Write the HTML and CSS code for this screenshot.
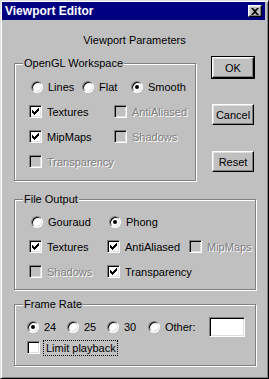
FILE: index.html
```html
<!DOCTYPE html>
<html>
<head>
	<meta charset="utf-8">
	<title>Viewport Editor</title>
	<link rel="stylesheet" href="styles.css">
</head>
<body>

<div class="window">
    <div class="titlebar">
        <span class="title">Viewport Editor</span>
        <span class="close-btn">
            <svg width="8" height="7" viewBox="0 0 8 7"><path d="M0 0h2l2 2 2-2h2l-3 3.5 3 3.5h-2l-2-2-2 2h-2l3-3.5z" fill="#000"/></svg>
        </span>
    </div>

    <div class="heading">Viewport Parameters</div>

    <div class="main">
        <div class="top-row">
            <!-- OpenGL settings -->
            <div class="group group-gl">
                <span class="legend">OpenGL Workspace</span>
                <div class="row radio-row">
                    <label class="opt w51"><span class="radio"></span>Lines</label>
                    <label class="opt w49"><span class="radio"></span>Flat</label>
                    <label class="opt"><span class="radio on"></span>Smooth</label>
                </div>
                <div class="row">
                    <label class="opt w85"><span class="check"><svg width="11" height="11"><path d="M2 4h1v1h1v1h1v-1h1v-1h1v-1h1v-1h1v3h-1v1h-1v1h-1v1h-1v1h-1v-1h-1v-1h-1z"/></svg></span>Textures</label>
                    <label class="opt dim"><span class="check off"></span>AntiAliased</label>
                </div>
                <div class="row">
                    <label class="opt w85"><span class="check"><svg width="11" height="11"><path d="M2 4h1v1h1v1h1v-1h1v-1h1v-1h1v-1h1v3h-1v1h-1v1h-1v1h-1v1h-1v-1h-1v-1h-1z"/></svg></span>MipMaps</label>
                    <label class="opt dim"><span class="check off"></span>Shadows</label>
                </div>
                <div class="row">
                    <label class="opt dim"><span class="check off"></span>Transparency</label>
                </div>
            </div>

            <div class="buttons">
                <button class="btn default">OK</button>
                <button class="btn">Cancel</button>
                <button class="btn">Reset</button>
            </div>
        </div>

        <!-- output settings -->
        <div class="group group-file">
            <span class="legend">File Output</span>
            <div class="row radio-row">
                <label class="opt w78"><span class="radio"></span>Gouraud</label>
                <label class="opt"><span class="radio on"></span>Phong</label>
            </div>
            <div class="row">
                <label class="opt w78"><span class="check"><svg width="11" height="11"><path d="M2 4h1v1h1v1h1v-1h1v-1h1v-1h1v-1h1v3h-1v1h-1v1h-1v1h-1v1h-1v-1h-1v-1h-1z"/></svg></span>Textures</label>
                <label class="opt w82"><span class="check"><svg width="11" height="11"><path d="M2 4h1v1h1v1h1v-1h1v-1h1v-1h1v-1h1v3h-1v1h-1v1h-1v1h-1v1h-1v-1h-1v-1h-1z"/></svg></span>AntiAliased</label>
                <label class="opt dim"><span class="check off"></span>MipMaps</label>
            </div>
            <div class="row">
                <label class="opt w78 dim"><span class="check off"></span>Shadows</label>
                <label class="opt"><span class="check"><svg width="11" height="11"><path d="M2 4h1v1h1v1h1v-1h1v-1h1v-1h1v-1h1v3h-1v1h-1v1h-1v1h-1v1h-1v-1h-1v-1h-1z"/></svg></span>Transparency</label>
            </div>
        </div>

        <!-- frame rate -->
        <div class="group group-rate">
            <span class="legend">Frame Rate</span>
            <div class="row short">
                <label class="opt w40"><span class="radio on"></span>24</label>
                <label class="opt w40"><span class="radio"></span>25</label>
                <label class="opt w41"><span class="radio"></span>30</label>
                <label class="opt w61"><span class="radio"></span>Other:</label>
                <input class="field" type="text">
            </div>
            <div class="row short">
                <label class="opt"><span class="check blank"></span><span class="focus">Limit playback</span></label>
            </div>
        </div>
    </div>
</div>

</body>
</html>
```

FILE: styles.css
```css
body {
    margin: 0;
    font-family: "Liberation Sans", Arial, sans-serif;
    font-size: 11px;
    background-color: #c0c0c0;
    color: #000;
}

.window {
    width: 269px;
    height: 379px;
    box-sizing: border-box;
    padding: 1px;
    background-color: #c0c0c0;
    border: 1px solid;
    border-color: #dfdfdf #000 #000 #dfdfdf;
    box-shadow: inset 1px 1px #fff, inset -1px -1px #808080;
}

.titlebar {
    height: 18px;
    margin-right: 2px;
    padding-left: 3px;
    display: flex;
    align-items: center;
    background-color: #000080;
    color: #fff;
}

.title {
    flex: 1;
    font-size: 12px;
    font-weight: bold;
}

.close-btn {
    width: 14px;
    height: 12px;
    margin-right: 3px;
    box-sizing: border-box;
    display: flex;
    align-items: center;
    justify-content: center;
    background-color: #c0c0c0;
    border: 1px solid;
    border-color: #fff #000 #000 #fff;
    box-shadow: inset -1px -1px #808080, inset 1px 1px #dfdfdf;
}

.close-btn svg {
    display: block;
}

.heading {
    margin-top: 13px;
    line-height: 14px;
    text-align: center;
}

.main {
    padding-left: 12px;
}

.top-row {
    display: flex;
    align-items: flex-start;
    margin-top: 9px;
}

/* etched group frame */
.group {
    position: relative;
    box-sizing: border-box;
    border: 1px solid #808080;
    box-shadow: inset 1px 1px #fff, 1px 1px #fff;
}

.legend {
    position: absolute;
    top: -7px;
    left: 8px;
    padding: 0 1px;
    line-height: 13px;
    background-color: #c0c0c0;
}

.group-gl {
    width: 182px;
    height: 118px;
    margin-top: 7px;
    padding: 10px 0 0 14px;
}

.group-file {
    width: 242px;
    height: 91px;
    margin-top: 18px;
    padding: 9px 0 0 14px;
}

.group-rate {
    width: 242px;
    height: 62px;
    margin-top: 14px;
    padding: 11px 0 0 12px;
}

.row {
    display: flex;
    align-items: center;
    height: 25px;
}

.row.short {
    height: 21px;
}

.radio-row {
    padding-left: 2px;
}

.opt {
    display: flex;
    align-items: center;
    white-space: nowrap;
}

.w40 { width: 40px; }
.w41 { width: 41px; }
.w49 { width: 49px; }
.w51 { width: 51px; }
.w61 { width: 61px; }
.w78 { width: 78px; }
.w82 { width: 82px; }
.w85 { width: 85px; }

.dim {
    color: #808080;
    text-shadow: 1px 1px 0 #fff;
}

.radio {
    flex: none;
    width: 12px;
    height: 12px;
    margin-right: 5px;
    box-sizing: border-box;
    display: flex;
    align-items: center;
    justify-content: center;
    border-radius: 50%;
    border: 1px solid;
    border-color: #808080 #fff #fff #808080;
    box-shadow: inset 1px 1px #000, inset -1px -1px #dfdfdf;
    background-color: #fff;
}

.radio.on::after {
    content: "";
    width: 4px;
    height: 4px;
    border-radius: 50%;
    background-color: #000;
}

.check {
    flex: none;
    width: 13px;
    height: 13px;
    margin-right: 5px;
    box-sizing: border-box;
    border: 1px solid;
    border-color: #808080 #fff #fff #808080;
    box-shadow: inset 1px 1px #000, inset -1px -1px #dfdfdf;
    background-color: #fff;
}

.check svg {
    display: block;
}

.check.off {
    background-color: #c0c0c0;
}

.check.blank {
    margin-right: 3px;
}

.focus {
    padding: 0 1px 0 2px;
    line-height: 14px;
    border: 1px dotted #000;
}

.field {
    width: 36px;
    height: 20px;
    margin: 0;
    padding: 0;
    box-sizing: border-box;
    border: 1px solid;
    border-color: #808080 #fff #fff #808080;
    box-shadow: inset 1px 1px #000, inset -1px -1px #dfdfdf;
    background-color: #fff;
    outline: none;
}

.buttons {
    display: flex;
    flex-direction: column;
    gap: 26px;
    margin-left: 15px;
    padding-top: 1px;
}

.btn {
    width: 42px;
    height: 21px;
    margin: 0 0 0 1px;
    padding: 0;
    font-family: inherit;
    font-size: 11px;
    color: #000;
    background-color: #c0c0c0;
    border: 1px solid;
    border-color: #fff #000 #000 #fff;
    box-shadow: inset -1px -1px #808080, inset 1px 1px #dfdfdf;
}

.btn.default {
    box-shadow: 0 0 0 1px #000, inset -1px -1px #808080, inset 1px 1px #dfdfdf;
}
```
